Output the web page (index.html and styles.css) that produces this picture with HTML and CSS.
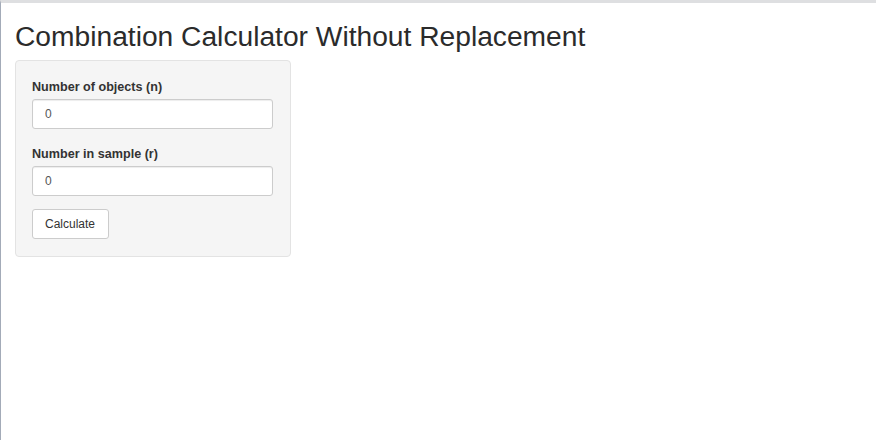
FILE: index.html
```html
<!DOCTYPE html>
<html>
<head>
<meta charset="utf-8">
<link rel="stylesheet" href="styles.css">
</head>
<body>
<div class="page">
  <h2 class="title">Combination Calculator Without Replacement</h2>
  <div class="well">
    <div class="group">
      <label class="label" for="n">Number of objects (n)</label>
      <input class="input" id="n" type="number" value="0">
    </div>
    <div class="group">
      <label class="label" for="r">Number in sample (r)</label>
      <input class="input" id="r" type="number" value="0">
    </div>
    <button class="btn" type="button">Calculate</button>
  </div>
</div>
</body>
</html>
```
FILE: styles.css
```css
html, body {
  margin: 0;
  padding: 0;
  background: #fff;
}
body {
  font-family: "Liberation Sans", Arial, sans-serif;
  color: #333;
}
.page {
  box-sizing: border-box;
  height: 440px;
  border-top: 3px solid #dedfe1;
  border-left: 1px solid #a3abb8;
  padding: 0 14px;
  overflow: hidden;
}
.title {
  margin: 18px 0 8px;
  font-size: 28.2px;
  line-height: 31px;
  font-weight: 400;
  color: #2b2b2b;
}
.well {
  box-sizing: border-box;
  width: 276px;
  background: #f5f5f5;
  border: 1px solid #e3e3e3;
  border-radius: 4px;
  padding: 17px 16px 17px;
  display: flex;
  flex-direction: column;
  align-items: flex-start;
}
.group {
  display: flex;
  flex-direction: column;
  margin-bottom: 16px;
}
.group + .group {
  margin-bottom: 13px;
}
.label {
  font-size: 12.6px;
  line-height: 18px;
  font-weight: 700;
  color: #333;
  margin-bottom: 3px;
}
.input {
  box-sizing: border-box;
  width: 241px;
  height: 30px;
  border: 1px solid #ccc;
  border-radius: 3px;
  background: #fff;
  padding: 0 12px;
  font-family: "Liberation Sans", Arial, sans-serif;
  font-size: 12px;
  color: #555;
  box-shadow: inset 0 1px 1px rgba(0,0,0,0.075);
  outline: none;
  -moz-appearance: textfield;
}
.input::-webkit-outer-spin-button,
.input::-webkit-inner-spin-button {
  -webkit-appearance: none;
  margin: 0;
}
.btn {
  box-sizing: border-box;
  height: 30px;
  padding: 0 13px 0 12px;
  background: #fff;
  border: 1px solid #ccc;
  border-radius: 3px;
  font-family: "Liberation Sans", Arial, sans-serif;
  font-size: 12px;
  color: #333;
}
```
